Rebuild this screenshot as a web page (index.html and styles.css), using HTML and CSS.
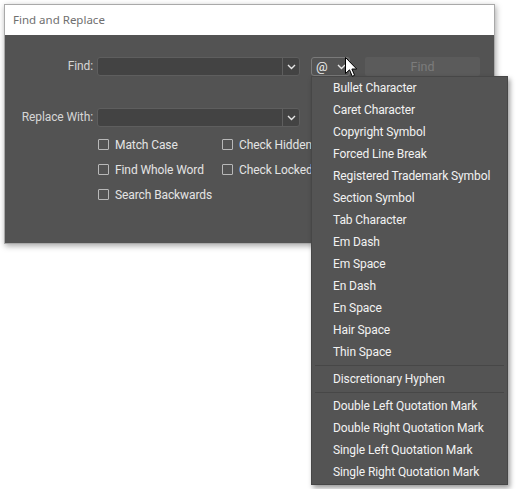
FILE: index.html
```html
<!DOCTYPE html>
<html lang="en">

<head>
    <meta charset="UTF-8">
    <title>Find and Replace</title>
    <link rel="stylesheet" href="styles.css">
</head>

<body>
    <div class="dialog">
        <!-- title bar -->
        <div class="title-bar">Find and Replace</div>

        <div class="dialog-body">
            <div class="form-grid">
                <label class="field-label">Find:</label>
                <div class="combo">
                    <span class="combo-text"></span>
                    <span class="combo-btn">
                        <svg width="9" height="6" viewBox="0 0 9 6"><path d="M1 1l3.5 3.5L8 1" fill="none" stroke="#e6e6e6" stroke-width="1.4"/></svg>
                    </span>
                </div>
                <div class="special-btn">
                    <span class="at">@</span>
                    <svg width="9" height="6" viewBox="0 0 9 6"><path d="M1 1l3.5 3.5L8 1" fill="none" stroke="#e6e6e6" stroke-width="1.4"/></svg>
                </div>
                <button class="find-btn" disabled>Find</button>

                <label class="field-label row-2">Replace With:</label>
                <div class="combo row-2">
                    <span class="combo-text"></span>
                    <span class="combo-btn">
                        <svg width="9" height="6" viewBox="0 0 9 6"><path d="M1 1l3.5 3.5L8 1" fill="none" stroke="#e6e6e6" stroke-width="1.4"/></svg>
                    </span>
                </div>
            </div>

            <!-- options -->
            <div class="options">
                <label class="check"><input type="checkbox"><span>Match Case</span></label>
                <label class="check"><input type="checkbox"><span>Check Hidden</span></label>
                <label class="check"><input type="checkbox"><span>Find Whole Word</span></label>
                <label class="check"><input type="checkbox"><span>Check Locked</span></label>
                <label class="check"><input type="checkbox"><span>Search Backwards</span></label>
            </div>
        </div>
    </div>

    <!-- special characters menu -->
    <ul class="menu">
        <li>Bullet Character</li>
        <li>Caret Character</li>
        <li>Copyright Symbol</li>
        <li>Forced Line Break</li>
        <li>Registered Trademark Symbol</li>
        <li>Section Symbol</li>
        <li>Tab Character</li>
        <li>Em Dash</li>
        <li>Em Space</li>
        <li>En Dash</li>
        <li>En Space</li>
        <li>Hair Space</li>
        <li>Thin Space</li>
        <li class="sep"></li>
        <li>Discretionary Hyphen</li>
        <li class="sep"></li>
        <li>Double Left Quotation Mark</li>
        <li>Double Right Quotation Mark</li>
        <li>Single Left Quotation Mark</li>
        <li>Single Right Quotation Mark</li>
    </ul>

    <!-- mouse pointer -->
    <svg class="cursor" width="13" height="21" viewBox="0 0 13 21">
        <path d="M0.5 0.5V16.5L4.5 12.8L7.3 19.3L9.6 18.3L6.9 12H11.7Z" fill="#fff" stroke="#000" stroke-width="1"/>
    </svg>
</body>

</html>
```

FILE: styles.css
```css
/* base */
body {
    margin: 0;
    width: 519px;
    height: 489px;
    background-color: #ffffff;
    font-family: Roboto, "Liberation Sans", Arial, sans-serif;
    font-size: 12px;
    letter-spacing: -0.1px;
    position: relative;
    overflow: hidden;
}

/* dialog window */
.dialog {
    margin: 4px 0 0 4px;
    width: 489px;
    border: 1px solid #a9a9a9;
    box-shadow: 1px 2px 6px rgba(0, 0, 0, 0.35);
}

.title-bar {
    height: 30px;
    line-height: 29px;
    padding-left: 8px;
    background-color: #ffffff;
    color: #6f6f6f;
    font-family: "Noto Sans", "Open Sans", sans-serif;
    font-size: 11.5px;
    letter-spacing: 0;
}

.dialog-body {
    height: 186px;
    padding-top: 22px;
    background-color: #535353;
}

/* find / replace fields */
.form-grid {
    display: grid;
    grid-template-columns: 88px 203px 46px 126px;
    grid-template-rows: 19px 19px;
    column-gap: 4px;
    row-gap: 32px;
}

.field-label {
    text-align: right;
    line-height: 19px;
    color: #d6d6d6;
}

.row-2 {
    grid-row: 2;
}

.combo {
    display: flex;
    background-color: #434343;
    border: 1px solid #5e5e5e;
    border-radius: 3px;
}

.combo-text {
    flex: 1;
}

.combo-btn {
    width: 16px;
    display: flex;
    align-items: center;
    justify-content: center;
    border-left: 1px solid #5e5e5e;
}

.special-btn {
    margin-left: 7px;
    display: flex;
    align-items: center;
    gap: 9px;
    padding-left: 4px;
    border: 1px solid #7a7a7a;
    border-radius: 3px;
    color: #eeeeee;
    font-size: 13px;
}

.at {
    line-height: 17px;
}

.find-btn {
    margin-left: 11px;
    border: none;
    border-radius: 2px;
    background-color: #5b5b5b;
    color: #7c7c7c;
    font-family: inherit;
    font-size: 12.5px;
    padding: 0;
}

/* checkbox options */
.options {
    margin: 5px 0 0 93px;
    display: grid;
    grid-template-columns: 124px auto;
    grid-auto-rows: 25px;
}

.check {
    display: flex;
    align-items: center;
    color: #e4e4e4;
    white-space: nowrap;
}

.check input {
    appearance: none;
    margin: 0 6px 0 0;
    width: 11px;
    height: 11px;
    border: 1px solid #b8b8b8;
    border-radius: 1px;
    background: transparent;
}

/* dropdown menu */
.menu {
    position: absolute;
    left: 311px;
    top: 76px;
    width: 195px;
    margin: 0;
    padding: 0 0 1px;
    list-style: none;
    background-color: #545454;
    border: 1px solid #474747;
    box-shadow: 2px 3px 5px rgba(0, 0, 0, 0.4);
}

.menu li {
    height: 22px;
    line-height: 22px;
    padding-left: 21px;
    color: #f2f2f2;
    white-space: nowrap;
}

.menu li.sep {
    height: 0;
    margin: 2px 3px 2px;
    border-top: 1px solid #474747;
}

.cursor {
    position: absolute;
    left: 345px;
    top: 57px;
}
```
